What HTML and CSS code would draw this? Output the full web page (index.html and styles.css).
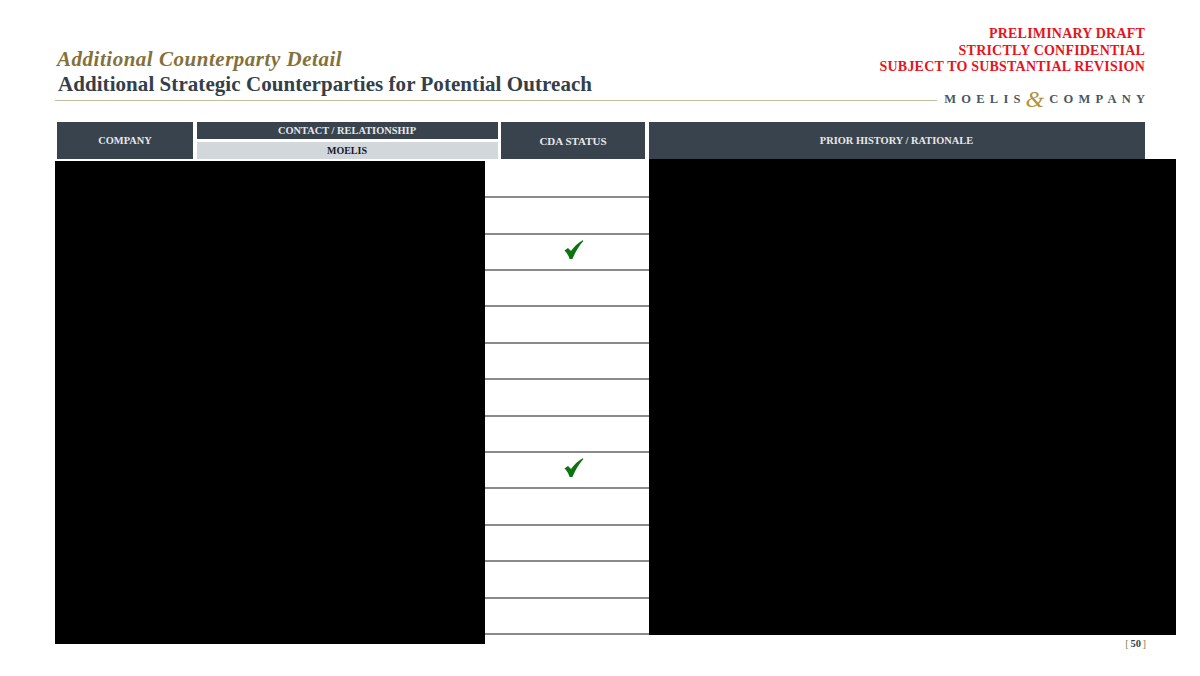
FILE: index.html
```html
<!DOCTYPE html>
<html lang="en">
<head>
<meta charset="utf-8">
<title>Additional Counterparty Detail</title>
<link rel="stylesheet" href="styles.css">
</head>
<body>
<div class="page">
  <header class="top">
    <div class="titles">
      <div class="eyebrow">Additional Counterparty Detail</div>
      <h1 class="title">Additional Strategic Counterparties for Potential Outreach</h1>
    </div>
    <div class="draft">
      <div>PRELIMINARY DRAFT</div>
      <div>STRICTLY CONFIDENTIAL</div>
      <div>SUBJECT TO SUBSTANTIAL REVISION</div>
    </div>
  </header>
  <div class="rule-row">
    <div class="rule"></div>
    <div class="logo"><span class="logo-word">MOELIS</span><span class="amp">&amp;</span><span class="logo-word">COMPANY</span></div>
  </div>
  <section class="table">
    <div class="head">
      <div class="hcell">COMPANY</div>
      <div class="hgroup">
        <div class="hsub dark">CONTACT / RELATIONSHIP</div>
        <div class="hsub light">MOELIS</div>
      </div>
      <div class="hcell hcell-status">CDA STATUS</div>
      <div class="hcell">PRIOR HISTORY / RATIONALE</div>
    </div>
    <div class="rows">
      <div class="row"></div>
      <div class="row"></div>
      <div class="row"><svg class="check" viewBox="0 0 20 20"><path d="M0.5 10.5 L4 8 L7 11 C10 6.8 14 3 18.6 0.2 L19.4 1 C14.8 6 11.4 12 8.4 19 L5.6 19 C4.6 15.6 2.8 12.8 0.5 10.5 Z"/></svg></div>
      <div class="row"></div>
      <div class="row"></div>
      <div class="row"></div>
      <div class="row"></div>
      <div class="row"></div>
      <div class="row"><svg class="check" viewBox="0 0 20 20"><path d="M0.5 10.5 L4 8 L7 11 C10 6.8 14 3 18.6 0.2 L19.4 1 C14.8 6 11.4 12 8.4 19 L5.6 19 C4.6 15.6 2.8 12.8 0.5 10.5 Z"/></svg></div>
      <div class="row"></div>
      <div class="row"></div>
      <div class="row"></div>
      <div class="row"></div>
    </div>
    <div class="redact redact-left"></div>
    <div class="redact redact-right"></div>
  </section>
  <footer class="pageno"><span class="br">[</span> 50 <span class="br">]</span></footer>
</div>
</body>
</html>
```
FILE: styles.css
```css
* { box-sizing: border-box; }
html, body { margin: 0; padding: 0; background: #fff; }
body { font-family: "Liberation Serif", "Times New Roman", serif; overflow: hidden; }
.page { width: 1200px; height: 676px; padding: 26px 54px 0 55px; }
.top { display: flex; justify-content: space-between; align-items: flex-start; height: 70px; }
.titles { padding: 21px 0 0 2px; }
.eyebrow { font-size: 21px; line-height: 25px; font-style: italic; font-weight: 700; color: #84713a; letter-spacing: 0.52px; }
.title { margin: 0; font-size: 21px; line-height: 24px; font-weight: 700; color: #333f4a; letter-spacing: 0.06px; padding-left: 1px; }
.draft { text-align: right; color: #e8131b; font-weight: 700; font-size: 14px; line-height: 16.5px; letter-spacing: 0.2px; margin-right: 1px; }
.rule-row { display: flex; align-items: center; gap: 7px; height: 10px; margin-top: -1px; }
.rule { flex: 1; height: 1px; background: #c5bf9b; }
.logo { display: flex; align-items: center; gap: 4px; height: 10px; font-size: 12.5px; font-weight: 700; color: #4a5662; white-space: nowrap; margin: -2px 1px 0 0; }
.logo-word { letter-spacing: 5.25px; margin-right: -5.25px; }
.amp { color: #b0923f; font-size: 24px; font-style: italic; font-weight: 400; line-height: 10px; padding: 0 1px; }
.table { position: relative; margin-top: 17px; padding-left: 2px; }
.head { display: grid; grid-template-columns: 136px 301px 144px 496px; column-gap: 3.5px; height: 37px; }
.hcell { background: #39434d; color: #e6e8ea; font-size: 10.4px; font-weight: 700; display: flex; align-items: center; justify-content: center; }
.hcell-status { font-size: 11px; }
.hgroup { display: flex; flex-direction: column; justify-content: space-between; }
.hsub { height: 17px; font-size: 10.4px; font-weight: 700; display: flex; align-items: center; justify-content: center; }
.dark { background: #39434d; color: #e6e8ea; }
.light { background: #d2d7dc; color: #15191c; font-size: 10px; }
.rows { padding-top: 2.73px; margin-right: 1px; }
.row { height: 36.42px; border-bottom: 2px solid #8a8a8a; display: flex; justify-content: center; align-items: flex-start; padding: 5px 55px 0 0; }
.check { width: 20px; height: 20px; fill: #0a7410; }
.redact { position: absolute; background: #000; }
.redact-left { left: 0; top: 39px; width: 430px; height: 483px; }
.redact-right { left: 594px; top: 37px; width: 527px; height: 476px; }
.pageno { text-align: right; font-size: 10.5px; font-weight: 700; color: #333f4a; line-height: 12px; margin-top: 3px; word-spacing: -1px; }
.br { color: #8f7f55; font-weight: 400; }
```
